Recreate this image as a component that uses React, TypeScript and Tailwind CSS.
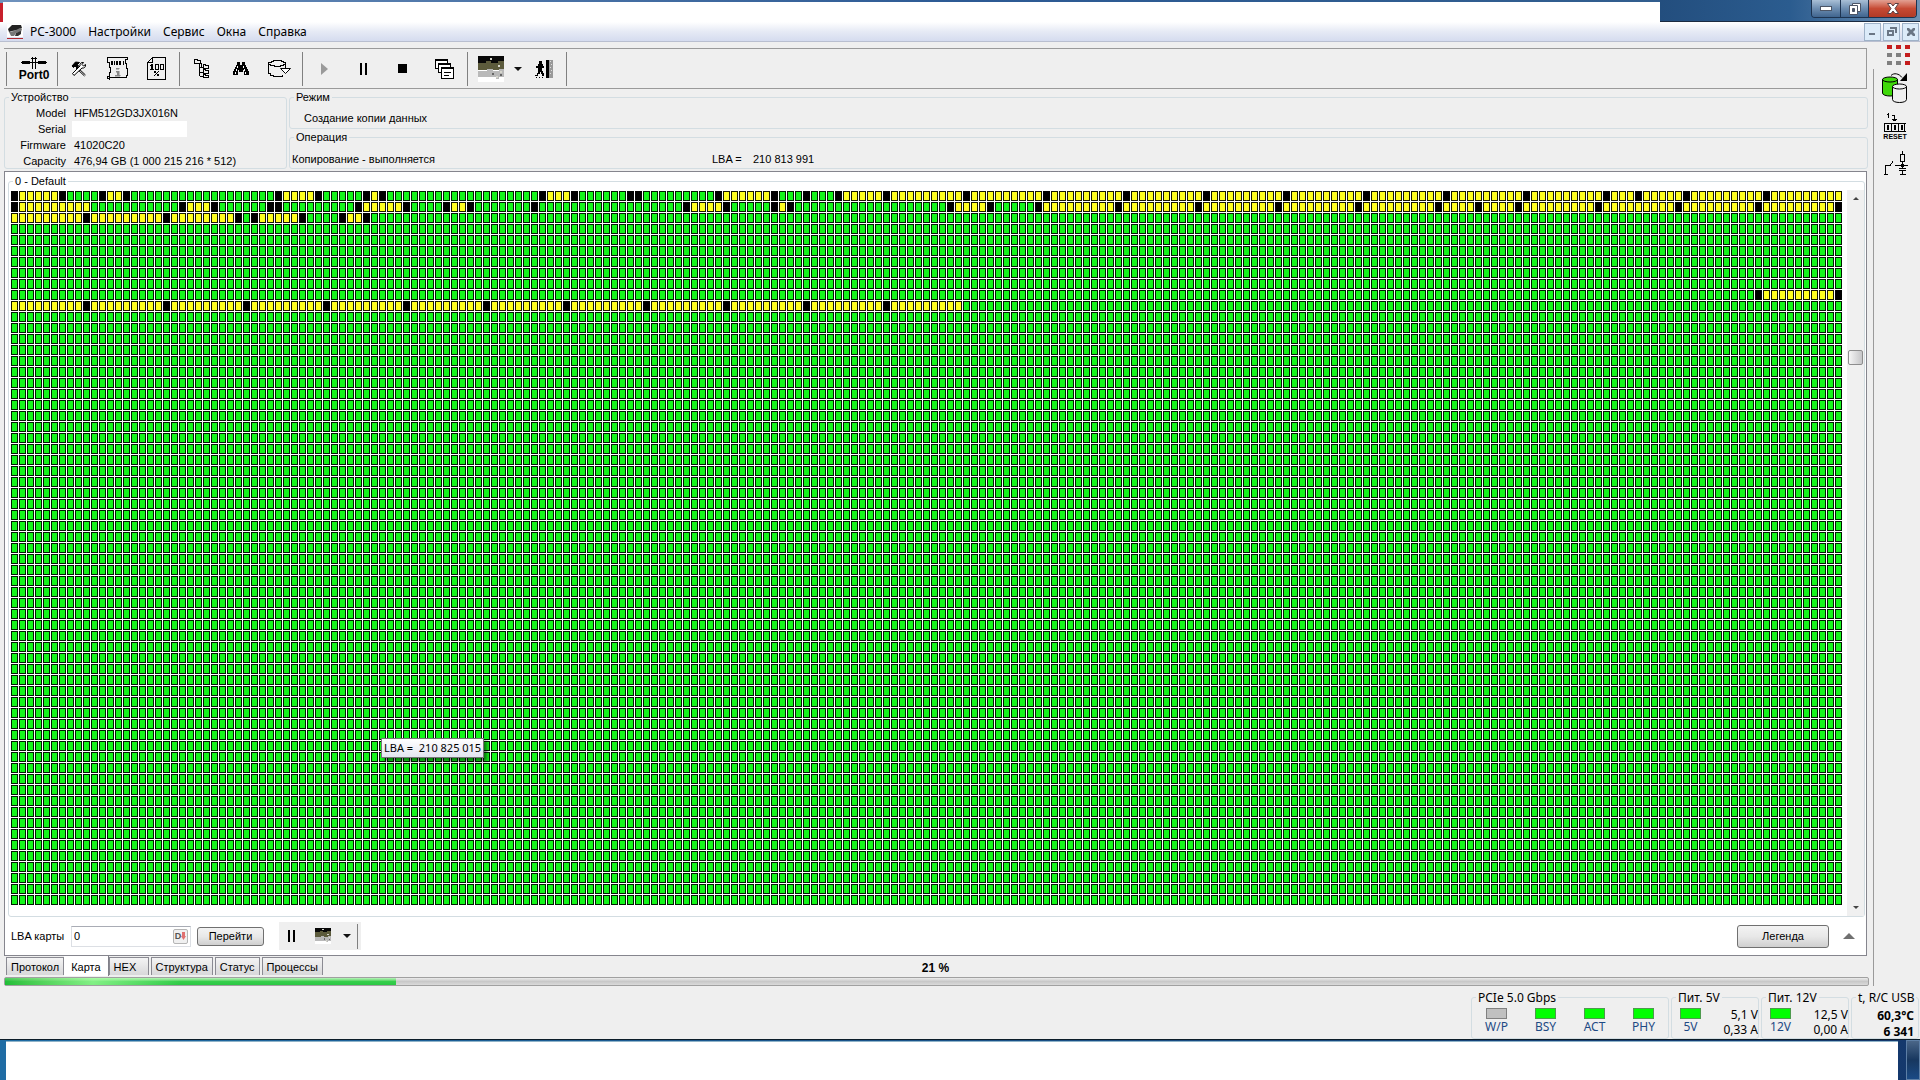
import React, { useState } from "react";

const CELL_W = 8;
const CELL_H = 11;
const COLS = 229;
const ROWS = 65;

// Runs of cells that are not green: [row, first column, last column]
const yellowRuns = [
  [0, 1, 5], [0, 12, 13], [0, 34, 37], [0, 45, 45], [0, 67, 69], [0, 89, 94], [0, 104, 228],
  [1, 1, 9], [1, 22, 24], [1, 44, 48], [1, 55, 56], [1, 85, 88], [1, 96, 96], [1, 118, 121], [1, 129, 227],
  [2, 0, 27], [2, 31, 35], [2, 42, 43],
  [9, 219, 227],
  [10, 0, 118],
];

const blackCells: Record<number, number[]> = {
  0: [0, 6, 11, 14, 33, 38, 44, 46, 66, 70, 77, 78, 88, 95, 99, 103, 109, 119, 129, 139, 149, 159, 169, 179, 189, 199, 203, 209, 219],
  1: [0, 21, 25, 32, 33, 43, 49, 54, 57, 65, 84, 89, 95, 97, 117, 122, 128, 138, 148, 158, 168, 178, 183, 188, 198, 208, 218, 228],
  2: [9, 19, 28, 30, 36, 41, 44],
  9: [218, 228],
  10: [9, 19, 29, 39, 49, 59, 69, 79, 89, 99, 109],
};

const menuItems = ["PC-3000", "Настройки", "Сервис", "Окна", "Справка"];
const tabs = ["Протокол", "Карта", "HEX", "Структура", "Статус", "Процессы"];

function SectorMap() {
  return (
    <svg className="block shrink-0" width={COLS * CELL_W} height={ROWS * CELL_H} shapeRendering="crispEdges">
      <defs>
        <pattern id="cell-ok" width={CELL_W} height={CELL_H} patternUnits="userSpaceOnUse">
          <rect width="7" height="10" fill="#001c00" />
          <rect x="1" y="1" width="5" height="8" fill="#14f61a" />
        </pattern>
        <pattern id="cell-skip" width={CELL_W} height={CELL_H} patternUnits="userSpaceOnUse">
          <rect width={CELL_W} height={CELL_H} fill="#fff" />
          <rect width="7" height="10" fill="#181800" />
          <rect x="1" y="1" width="5" height="8" fill="#ffff20" />
        </pattern>
      </defs>
      <rect width={COLS * CELL_W} height={ROWS * CELL_H} fill="url(#cell-ok)" />
      {yellowRuns.map(([row, from, to]) => (
        <rect
          key={`${row}-${from}`}
          x={from * CELL_W}
          y={row * CELL_H}
          width={(to - from + 1) * CELL_W}
          height={CELL_H}
          fill="url(#cell-skip)"
        />
      ))}
      {Object.entries(blackCells).map(([row, cols]) =>
        cols.map((col) => (
          <rect key={`${row}-${col}`} x={col * CELL_W} y={Number(row) * CELL_H} width="7" height="10" fill="#000" />
        ))
      )}
    </svg>
  );
}

function Group({ title, className = "", children }: { title: string; className?: string; children?: React.ReactNode }) {
  return (
    <fieldset className={`min-w-0 rounded-[3px] border border-[#d3dde2] ${className}`}>
      <legend className="ml-1 px-0.5 whitespace-pre">{title}</legend>
      {children}
    </fieldset>
  );
}

function ToolButton({ label, className = "w-[39px]", children }: { label: string; className?: string; children: React.ReactNode }) {
  return (
    <button type="button" aria-label={label} className={`flex h-full items-center justify-center ${className}`}>
      {children}
    </button>
  );
}

/* ---------- icons ---------- */

function AppIcon() {
  return (
    <svg width="16" height="16" viewBox="0 0 16 16">
      <rect width="16" height="13" fill="#fff" />
      <path d="M1 5 5 1h9l1 3-4 2-6 1-3 1z" fill="#222" />
      <path d="M2 8l5-1 6-3 2 1-1 3-5 1-2 3H4z" fill="#777" />
      <path d="M9 9l5-2v3l-3 2H8z" fill="#333" />
      <rect y="14" width="16" height="1" fill="#b02a30" />
    </svg>
  );
}

function PortIcon() {
  return (
    <svg width="28" height="13" viewBox="0 0 28 13" shapeRendering="crispEdges">
      <path d="M1 6h26v1H1zM2 5h8v3H2zM18 5h8v3h-8zM12 1h1v12h-1zM15 1h1v12h-1zM11 2h6v1h-6z" />
    </svg>
  );
}

function ToolsIcon() {
  return (
    <svg width="16" height="16" viewBox="0 0 16 16" fill="none" stroke="#000">
      <path d="M6 6l8.500 8M5 7l8.500 8" />
      <path d="M1 5l3.500-4 4 .5-2 2 1 1.500L6 7 4 5 2.500 6.500z" fill="#000" />
      <path d="M14.500 3.500l-2 1.500-1.500-1.500 1.500-2c-2-.5-4 1-3.500 3.500L1.500 12.500l1.500 2 8-7.500c2 .5 4-1 3.500-3.500z" fill="#fff" />
    </svg>
  );
}

function ScrollIcon() {
  return (
    <svg width="22" height="23" viewBox="0 0 22 23" fill="none" stroke="#000" shapeRendering="crispEdges">
      <path d="M2.500.5h18v2h-2v4h1v5h1v7h-1v2h-17v2-1h-2v-2h2v-4h1v-5h-1v-5h-2v-5z" />
      <path d="M4.500 4.500h1v3h-1zM7.500 4v4M9.500 4.500h1v3h-1zM12.500 4.500h1v3h-1zM16.500 4v4" />
      <path d="M9 11h3v1H9zM9 14h3v4h1v1H8v-1h2v-3H9z" fill="#888" stroke="#888" strokeWidth=".5" />
    </svg>
  );
}

function PercentIcon() {
  return (
    <svg width="20" height="24" viewBox="0 0 20 24" shapeRendering="crispEdges">
      <path d="M5.500.5h13v22H.5v-17zM5.500.5v5h-5" fill="none" stroke="#000" />
      <path d="M4 7h2v5H4zM3 8h1v1H3zM3 12h4v1H3z" />
      <path d="M8 7h4v6H8zM9 8v4h2V8zM13 7h4v6h-4zM14 8v4h2V8z" fillRule="evenodd" />
      <path d="M7 14h2v2H7zM11 14h1v1h-1zM10 15h1v1h-1zM9 16h1v1H9zM8 17h1v1H8zM7 18h1v1H7zM10 17h2v2h-2z" />
    </svg>
  );
}

function TreeIcon() {
  return (
    <svg width="16" height="20" viewBox="0 0 16 20" fill="none" stroke="#000" shapeRendering="crispEdges">
      <path d="M.5.5h3v1h3v3h-6zM5.500 5v12M7.500 4v4M6 8.500h3M6 13.500h3M6 17.500h3" />
      <path d="M9.500 5.500h2v1h3v3h-5zM9.500 10.500h2v1h3v3h-5zM9.500 15.500h2v1h3v2h-5z" />
    </svg>
  );
}

function BinocularsIcon() {
  return (
    <svg width="16" height="14" viewBox="0 0 16 14" shapeRendering="crispEdges">
      <path d="M4 0h3v3h2V0h3v3h1v2h1v2h1v2h1v4h-5V8h-1v2H6V8H5v5H0V9h1V7h1V5h1V3h1z" />
      <path d="M4 4h1v2H4zM3 7h1v2H3zM2 10h1v2H2zM10 4h1v2h-1zM11 7h1v2h-1zM12 10h1v2h-1z" fill="#fff" />
    </svg>
  );
}

function DiskArrowIcon() {
  return (
    <svg width="23" height="18" viewBox="0 0 23 18" fill="none" stroke="#000" shapeRendering="crispEdges">
      <path d="M3.500 1.500h2v-1h8v1h2v1h2v2h-2v1h-3v1h-6v-1h-4v-1h-2v-2h3zM.5 4v9h2v2h3v1h9v-1M17.500 4v4" />
      <path d="M12.500 8.500h10l-5 5z" fill="#fff" shapeRendering="auto" />
    </svg>
  );
}

function WindowsIcon() {
  return (
    <svg width="20" height="20" viewBox="0 0 20 20" fill="#fff" stroke="#000" shapeRendering="crispEdges">
      <path d="M.5.5h12v9H.5zM.5 1.500h12" />
      <path d="M3.500 4.500h12v9h-12zM3.500 5.500h12" />
      <path d="M6.500 8.500h12v11h-12zM6.500 9.500h12M9 13.500h7M9 16.500h5" />
    </svg>
  );
}

function PictureIcon({ size }: { size: number }) {
  return (
    <svg width={size} height={size} viewBox="0 0 26 26" shapeRendering="crispEdges">
      <rect width="26" height="26" fill="#fff" />
      <path d="M0 0h26v8H0z" fill="#080808" />
      <path d="M0 7h8V5h5v2h7V5h6v9H0z" fill="#5c5b3c" />
      <path d="M0 15h9v-2h6v2h6v-2h5v8h-5v2h-3v-2H0z" fill="#b9b9b9" />
      <path d="M12 2h2v2h-2zM20 9h2v2h-2zM22 15h2v2h-2zM18 20h2v2h-2z" fill="#d5d5cc" />
      <path d="M14 17h2v2h-2zM22 18h2v2h-2z" fill="#666" />
    </svg>
  );
}

function ExitIcon() {
  return (
    <svg width="19" height="18" viewBox="0 0 19 18" shapeRendering="crispEdges">
      <path d="M4 1h3v3H4zM3 4h5v2h1v2H7v3h1v2h1v3H7v-2H6v-2H5v2H3v2H0v-1h2v-2h1V8H1V6h2zM1 17h1v1H1zM4 17h1v1H4zM7 17h1v1H7z" />
      <path d="M11 0h3v18h-3z" />
      <path d="M14 0h4v18h-4z" fill="#999" />
      <path d="M15 1h1v1h-1zM16 4h1v1h-1zM15 7h1v1h-1zM16 10h1v1h-1zM15 13h1v1h-1z" fill="#ddd" />
    </svg>
  );
}

function PauseIcon() {
  return (
    <svg width="8" height="12" viewBox="0 0 8 12" shapeRendering="crispEdges">
      <path d="M0 0h2v12H0zM5 0h2v12H5z" />
    </svg>
  );
}

function CaretIcon({ up = false, size = 8, color = "#111" }: { up?: boolean; size?: number; color?: string }) {
  return (
    <svg width={size} height={size / 2} viewBox="0 0 8 4" fill={color}>
      <path d={up ? "M0 4h8L4 0z" : "M0 0h8L4 4z"} />
    </svg>
  );
}

function DotsIcon() {
  const dots = ["#c41c1c", "#c41c1c", "#c41c1c", "#808080", "#808080", "#c41c1c", "#808080", "#808080", "#c41c1c"];
  return (
    <svg width="23" height="20" viewBox="0 0 23 20" shapeRendering="crispEdges">
      {dots.map((fill, i) => (
        <rect key={i} x={(i % 3) * 9} y={Math.floor(i / 3) * 8} width="5" height="4" fill={fill} />
      ))}
    </svg>
  );
}

function CopyDiskIcon() {
  return (
    <svg width="26" height="30" viewBox="0 0 26 30" stroke="#000">
      <path d="M.5 6v14c0 4 15 4 15 0V6" fill="#3fd80a" />
      <ellipse cx="8" cy="6.500" rx="7.500" ry="2.500" fill="#3fd80a" />
      <path d="M10.500 13v13.500c0 4 14 4 14 0V13" fill="#f0f0f0" />
      <ellipse cx="17.500" cy="13.500" rx="7" ry="2.500" fill="#f0f0f0" />
      <path d="M9 2.500c3-3 8-2 11 2" fill="none" />
      <path d="M25 0v8h-7z" stroke="none" />
    </svg>
  );
}

function ResetIcon() {
  return (
    <svg width="22" height="20" viewBox="0 0 22 20" fill="none" stroke="#000" shapeRendering="crispEdges">
      <path d="M4.500 0v5M3 1.500h1M8 2.500h2.500V8M8 6.500h5M9 7.500h3M22 10.500H.5v8H22M7.500 10v9M14.500 10v9M20.500 10v9" />
      <path d="M3.500 12.500h1v4h-1zM10.500 12.500h1v4h-1zM17.500 12.500h1v4h-1z" />
    </svg>
  );
}

function CircuitIcon() {
  return (
    <svg width="25" height="25" viewBox="0 0 25 25" fill="none" stroke="#000" shapeRendering="crispEdges">
      <path d="M19.500 0v3M17.500 3.500h4v7h-4zM19.500 11v6M12 14.500h13M16 17.500h7M16 19.500h7M19.500 20v4M17 23.500h6M1 23.500h4M2.500 23V14.500H7l3-4" />
      <path d="M18.500 13.500h2v2h-2z" fill="#000" />
    </svg>
  );
}

/* ---------- page parts ---------- */

function TitleBar() {
  return (
    <header className="flex h-[22px] bg-gradient-to-r from-[#6f92bd] via-[#2c5a94] to-[#335f8c]">
      <div className="mt-[3px] w-[3px] bg-[#c8202c]" />
      <div className="mt-0.5 flex-1 bg-white" />
      <div className="flex h-[22px] w-[260px] justify-end border-b border-[#1b2a40] bg-gradient-to-r from-[#234e7e] via-[#2b5c8f] to-[#6f93b5] pr-[3px]">
        <div className="flex h-[18px] overflow-hidden rounded-b-[4px] border border-t-0 border-[#1d3350]">
          <button type="button" aria-label="Свернуть" className="flex w-7 items-center justify-center bg-gradient-to-b from-[#a9bfd6] via-[#6d8db0] to-[#40658f]">
            <svg width="12" height="5" viewBox="0 0 12 5"><rect x=".5" y=".5" width="11" height="4" fill="#fff" stroke="#4c5566" /></svg>
          </button>
          <button type="button" aria-label="Развернуть" className="flex w-7 items-center justify-center border-l border-[#1d3350] bg-gradient-to-b from-[#a9bfd6] via-[#6d8db0] to-[#40658f]">
            <svg width="12" height="12" viewBox="0 0 12 12" fill="#fff" stroke="#4c5566">
              <path d="M3.500.5h8v8h-8z" />
              <path d="M.5 2.500h8v9h-8z" />
              <path d="M3.500 5.500h2v3h-2z" fill="#4c5566" />
            </svg>
          </button>
          <button type="button" aria-label="Закрыть" className="flex w-12 items-center justify-center border-l border-[#1d3350] bg-gradient-to-b from-[#e2a093] via-[#c64a34] to-[#b13a26]">
            <svg width="12" height="11" viewBox="0 0 12 11"><path d="M.5.5h3.500L6 3l2-2.500h3.500L8 5.500l3.500 5H8L6 8l-2 2.500H.5L4 5.500z" fill="#fff" stroke="#5b4044" /></svg>
          </button>
        </div>
      </div>
    </header>
  );
}

function MenuBar() {
  return (
    <nav className="flex h-5 items-center border-b border-[#b9bfd0] bg-gradient-to-b from-white via-[#e6eaf5] to-[#d5dcef] pl-[7px] font-['Noto_Sans',sans-serif] text-[12px] leading-4">
      <AppIcon />
      <div className="flex flex-1 gap-3 pl-[7px]">
        {menuItems.map((item) => (
          <button key={item} type="button">{item}</button>
        ))}
      </div>
      <div className="flex gap-[2px] pr-[1px]">
        {["M4 9h6v2H4z", "M6 3h7v6h-2V5H6zM3 6h7v6H3zM5 8v2h3V8z", "M4 4h2l2 2 2-2h2v2l-2 2 2 2v2h-2l-2-2-2 2H4v-2l2-2-2-2z"].map((d, i) => (
          <button
            key={d}
            type="button"
            aria-label={["Свернуть окно", "Восстановить окно", "Закрыть окно"][i]}
            className="flex h-[18px] w-[17px] items-center justify-center border border-[#9fb2c8] bg-[#dcebf9]"
          >
            <svg width="15" height="15" viewBox="0 0 15 15" fill="#6a7685" fillRule="evenodd"><path d={d} /></svg>
          </button>
        ))}
      </div>
    </nav>
  );
}

function Toolbar() {
  return (
    <div className="mt-1.5 mr-1.5 ml-1 flex h-[41px] items-center border-y border-r border-[#9a9a9a] pl-0.5">
      <div className="flex h-[34px] w-[52px] border-x border-[#808080]">
        <ToolButton label="Port 0" className="w-full flex-col pl-1">
          <PortIcon />
          <span className="text-[12px] leading-3 font-bold">Port0</span>
        </ToolButton>
      </div>
      <div className="flex h-[34px] border-r border-[#808080] pr-[3px] pl-px">
        <ToolButton label="Утилита"><ToolsIcon /></ToolButton>
        <ToolButton label="Информация"><ScrollIcon /></ToolButton>
        <ToolButton label="Проценты"><PercentIcon /></ToolButton>
      </div>
      <div className="flex h-[34px] border-r border-[#808080] pr-[3px] pl-0.5">
        <ToolButton label="Дерево"><TreeIcon /></ToolButton>
        <ToolButton label="Поиск"><BinocularsIcon /></ToolButton>
        <ToolButton label="Сохранить"><DiskArrowIcon /></ToolButton>
      </div>
      <div className="flex h-[34px] border-r border-[#808080] pl-0.5">
        <ToolButton label="Старт">
          <svg width="7" height="12" viewBox="0 0 7 12" fill="#9a9a9a"><path d="M0 0v12l7-6z" /></svg>
        </ToolButton>
        <ToolButton label="Пауза"><PauseIcon /></ToolButton>
        <ToolButton label="Стоп"><span className="size-[9px] bg-black" /></ToolButton>
        <ToolButton label="Окна" className="w-[45px]"><WindowsIcon /></ToolButton>
      </div>
      <div className="flex h-[34px] border-r border-[#808080]">
        <ToolButton label="Карта" className="w-[45px]"><PictureIcon size={26} /></ToolButton>
        <ToolButton label="Вид карты" className="w-2.5"><CaretIcon /></ToolButton>
        <ToolButton label="Выход" className="w-[43px]"><ExitIcon /></ToolButton>
      </div>
    </div>
  );
}

function DeviceInfo() {
  return (
    <div className="mt-0.5 mr-[5px] ml-1 flex gap-0.5 leading-[13px]">
      <Group title="Устройство" className="h-[78px] w-[283px]">
        <dl className="grid grid-cols-[61px_1fr] gap-x-2 pt-px leading-4">
          <dt className="text-right">Model</dt>
          <dd>HFM512GD3JX016N</dd>
          <dt className="text-right">Serial</dt>
          <dd className="-ml-0.5 h-4 w-[115px] bg-white" />
          <dt className="text-right">Firmware</dt>
          <dd>41020C20</dd>
          <dt className="text-right">Capacity</dt>
          <dd>476,94 GB (1 000 215 216 * 512)</dd>
        </dl>
      </Group>
      <div className="flex min-w-0 flex-1 flex-col gap-0.5">
        <Group title="Режим" className="h-[38px]">
          <p className="pt-2 pl-3.5">Создание копии данных</p>
        </Group>
        <Group title="Операция" className="h-[38px]">
          <p className="flex pt-[9px] pl-0.5">
            <span className="w-[420px]">Копирование - выполняется</span>
            <span className="w-[41px]">LBA =</span>
            <span>210 813 991</span>
          </p>
        </Group>
      </div>
    </div>
  );
}

function MapPanel() {
  const [lba, setLba] = useState("0");
  return (
    <main className="mt-0.5 mr-1.5 ml-1 border border-[#85858d] bg-white pr-px">
      <Group title="0 - Default" className="mt-[3px] ml-[3px] leading-[13px]">
        <div className="flex justify-between pt-[2px] pl-0.5">
          <div className="relative mt-px min-w-0 flex-1 overflow-hidden pb-2.5">
            <SectorMap />
            <div className="absolute top-[547px] left-[370px] border border-[#767676] bg-gradient-to-b from-white to-[#e4e5f0] px-[2px] font-['Noto_Sans',sans-serif] text-[11px] leading-[18px] whitespace-pre shadow-[3px_3px_3px_rgba(0,0,0,0.5)]">
              LBA =  210 825 015
            </div>
          </div>
          <div className="flex w-[17px] flex-col items-center bg-[#f0f0f0] py-[7px]">
            <CaretIcon up size={6} color="#444" />
            <div className="mt-[150px] h-[15px] w-[15px] rounded-[2px] border border-[#8d8d8d] bg-gradient-to-r from-[#f5f5f5] to-[#c6c6c8]" />
            <div className="mt-auto flex"><CaretIcon size={6} color="#444" /></div>
          </div>
        </div>
      </Group>
      <form className="flex h-[38px] items-center pl-1.5" onSubmit={(e) => e.preventDefault()}>
        <label htmlFor="lba" className="w-[60px]">LBA карты</label>
        <div className="flex h-[21px] w-[120px] items-center border border-[#dcdfe4] border-t-[#a9acb5] pr-0.5">
          <input id="lba" value={lba} onChange={(e) => setLba(e.target.value)} className="min-w-0 flex-1 pl-0.5 outline-none" />
          <button type="button" aria-label="Dec" className="flex h-[15px] w-[15px] items-center justify-center rounded-[2px] border border-[#b5b5b5] bg-[#f0f0f0] text-[9px] leading-none font-bold text-[#555]">
            D
            <svg width="5" height="8" viewBox="0 0 5 8" fill="#e07070"><path d="M1 0h3v4h1L2.500 8 0 4h1z" /></svg>
          </button>
        </div>
        <button type="submit" className="ml-1.5 h-[19px] w-[67px] rounded-[3px] border border-[#707070] bg-gradient-to-b from-[#f3f3f3] via-[#e8e8e8] to-[#cfcfcf] leading-4">
          Перейти
        </button>
        <div className="ml-[15px] flex h-7 w-[82px] items-center bg-[#efefef]">
          <ToolButton label="Пауза карты" className="w-[26px]"><PauseIcon /></ToolButton>
          <ToolButton label="Вид" className="w-9"><PictureIcon size={16} /></ToolButton>
          <ToolButton label="Меню вида" className="w-3"><CaretIcon /></ToolButton>
          <span className="ml-1 h-[25px] w-px bg-[#808080]" />
        </div>
        <button type="button" className="ml-auto h-[23px] w-[92px] rounded-[3px] border border-[#707070] bg-gradient-to-b from-[#f3f3f3] via-[#e8e8e8] to-[#cfcfcf]">
          Легенда
        </button>
        <button type="button" aria-label="Развернуть панель" className="mr-2.5 ml-3.5"><CaretIcon up size={12} color="#707070" /></button>
      </form>
    </main>
  );
}

function Tabs() {
  const [active, setActive] = useState("Карта");
  return (
    <div className="relative mr-2 ml-1.5 flex h-[21px] items-start gap-0.5 leading-4">
      {tabs.map((tab) => (
        <button
          key={tab}
          type="button"
          onClick={() => setActive(tab)}
          className={
            tab === active
              ? "-mx-0.5 h-5 border-r border-[#808088] bg-white px-[7px] pt-0.5"
              : "mt-px h-[18px] min-w-10 border border-b-0 border-[#8a8a92] bg-gradient-to-b from-[#f4f4f4] to-[#d8d8da] px-1 text-left"
          }
        >
          {tab}
        </button>
      ))}
      <span className="absolute inset-x-0 top-1 text-center text-[12px] leading-4 font-bold">21 %</span>
    </div>
  );
}

function CopyProgress() {
  return (
    <div role="progressbar" aria-valuenow={21} aria-label="Копирование" className="mr-1 ml-1 flex h-[9px] rounded-[2px] border border-[#a0a0a0] bg-gradient-to-b from-[#ececec] via-[#c8c8c8] to-[#dadada]">
      <div className="w-[21%] bg-gradient-to-b from-[#b8f5bd] via-[#35cf4b] to-[#2cc644]">
        <div className="h-full w-[45%] bg-gradient-to-r from-[#10b52c]/60 via-[#a5ff9f]/70 to-transparent" />
      </div>
    </div>
  );
}

function Led({ label, on = true }: { label: string; on?: boolean }) {
  return (
    <div className="flex w-[49px] flex-col items-center text-[#1e4a84]">
      <span className={`h-[11px] w-[21px] border ${on ? "border-[#4d9a4d] bg-[#00ff00]" : "border-[#808080] bg-[#c0c0c0]"}`} />
      <span>{label}</span>
    </div>
  );
}

function Power({ title, led, volts, amps }: { title: string; led: string; volts: string; amps: string }) {
  return (
    <Group title={title} className="w-[88px]">
      <div className="flex justify-between">
        <div className="-ml-1.5 pt-[3px]"><Led label={led} /></div>
        <div className="pt-0.5 text-right leading-[15px]">
          <p>{volts}</p>
          <p>{amps}</p>
        </div>
      </div>
    </Group>
  );
}

function StatusBar() {
  return (
    <footer className="flex h-[49px] justify-end gap-0.5 pr-px font-['Noto_Sans',sans-serif] text-[12px] leading-[15px]">
      <Group title="PCIe 5.0 Gbps" className="w-[198px]">
        <div className="flex pt-[3px]">
          <Led label="W/P" on={false} />
          <Led label="BSY" />
          <Led label="ACT" />
          <Led label="PHY" />
        </div>
      </Group>
      <Power title="Пит. 5V" led="5V" volts="5,1 V" amps="0,33 A" />
      <Power title="Пит. 12V" led="12V" volts="12,5 V" amps="0,00 A" />
      <Group title="t, R/C USB" className="w-[68px]">
        <div className="pt-[3px] pr-1 text-right leading-4 font-bold">
          <p>60,3°C</p>
          <p>6 341</p>
        </div>
      </Group>
    </footer>
  );
}

export default function App() {
  return (
    <div className="flex min-h-screen flex-col bg-[#efefef] font-['Liberation_Sans',sans-serif] text-[11px] text-black">
      <TitleBar />
      <MenuBar />
      <div className="flex">
        <div className="min-w-0 flex-1">
          <Toolbar />
          <DeviceInfo />
          <MapPanel />
          <Tabs />
          <CopyProgress />
        </div>
        <aside className="flex w-[47px] flex-col pt-[3px]">
          <button type="button" aria-label="Порты" className="mr-2.5 self-end"><DotsIcon /></button>
          <div className="mt-1 flex flex-1 flex-col items-center gap-2.5 border-l border-[#9a9a9a] pt-1 pr-1">
            <button type="button" aria-label="Копия диска"><CopyDiskIcon /></button>
            <button type="button" className="flex flex-col items-center text-[7px] leading-[8px] font-bold">
              <ResetIcon />
              RESET
            </button>
            <button type="button" aria-label="Питание"><CircuitIcon /></button>
          </div>
        </aside>
      </div>
      <div className="h-1" />
      <StatusBar />
      <div className="flex min-h-10 flex-1 border-t border-[#0c1c28] bg-gradient-to-r from-[#1f6ca4] to-[#14386c]">
        <div className="mt-px ml-1.5 flex-1 border-t border-[#8fb3c8] bg-white" />
        <div className="w-[22px] pl-2">
          <div className="h-full border border-[#5d7fa6] bg-gradient-to-b from-[#4a6688] via-[#17375f] to-[#1a4a85]" />
        </div>
      </div>
    </div>
  );
}
